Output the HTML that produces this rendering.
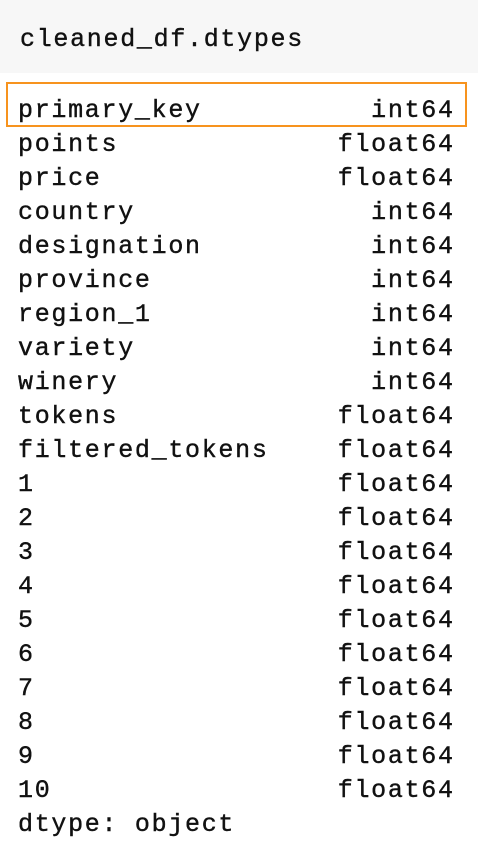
<!DOCTYPE html>
<html><head><style>
html,body{margin:0;padding:0;background:#fff;width:478px;height:860px;overflow:hidden}
.top{position:absolute;left:0;top:0;width:478px;height:73px;background:#f7f7f7}
.t{position:absolute;font-family:"Liberation Mono",monospace;font-size:25px;letter-spacing:1.7px;color:#111;line-height:34px;white-space:pre;-webkit-text-stroke:0.4px #111}
.r{position:absolute;left:18px;width:436.7px;height:34px}
.r span{position:absolute;right:0;top:0}
.box{position:absolute;left:6px;top:82px;width:457px;height:41px;border:2px solid #f7931e}
</style></head><body>
<div class="top"></div>
<div class="t" style="left:20px;top:23px">cleaned_df.dtypes</div>
<div class="box"></div>
<div class="t r" style="top:94px">primary_key<span>int64</span></div>
<div class="t r" style="top:128px">points<span>float64</span></div>
<div class="t r" style="top:162px">price<span>float64</span></div>
<div class="t r" style="top:196px">country<span>int64</span></div>
<div class="t r" style="top:230px">designation<span>int64</span></div>
<div class="t r" style="top:264px">province<span>int64</span></div>
<div class="t r" style="top:298px">region_1<span>int64</span></div>
<div class="t r" style="top:332px">variety<span>int64</span></div>
<div class="t r" style="top:366px">winery<span>int64</span></div>
<div class="t r" style="top:400px">tokens<span>float64</span></div>
<div class="t r" style="top:434px">filtered_tokens<span>float64</span></div>
<div class="t r" style="top:468px">1<span>float64</span></div>
<div class="t r" style="top:502px">2<span>float64</span></div>
<div class="t r" style="top:536px">3<span>float64</span></div>
<div class="t r" style="top:570px">4<span>float64</span></div>
<div class="t r" style="top:604px">5<span>float64</span></div>
<div class="t r" style="top:638px">6<span>float64</span></div>
<div class="t r" style="top:672px">7<span>float64</span></div>
<div class="t r" style="top:706px">8<span>float64</span></div>
<div class="t r" style="top:740px">9<span>float64</span></div>
<div class="t r" style="top:774px">10<span>float64</span></div>
<div class="t r" style="top:808px">dtype: object</div>
</body></html>
